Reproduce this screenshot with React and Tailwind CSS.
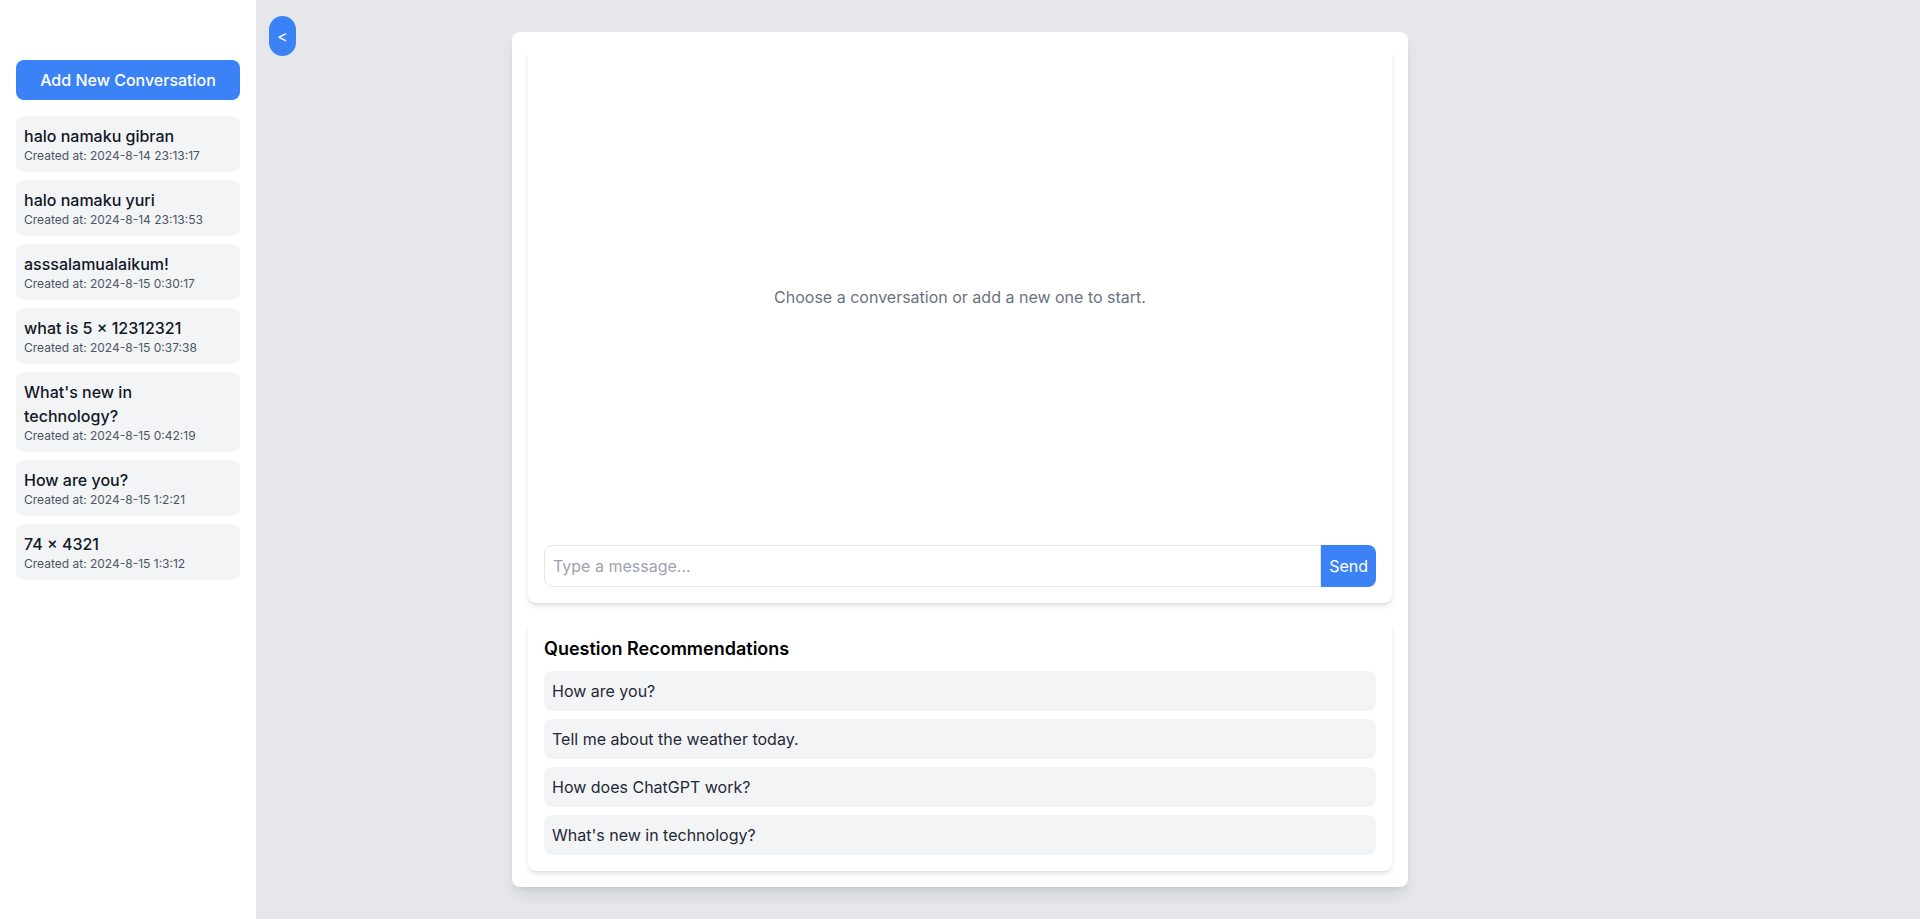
import { useState } from 'react';

const conversations = [
  { id: 1, title: 'halo namaku gibran', createdAt: '2024-8-14 23:13:17' },
  { id: 2, title: 'halo namaku yuri', createdAt: '2024-8-14 23:13:53' },
  { id: 3, title: 'asssalamualaikum!', createdAt: '2024-8-15 0:30:17' },
  { id: 4, title: 'what is 5 × 12312321', createdAt: '2024-8-15 0:37:38' },
  { id: 5, title: "What's new in technology?", createdAt: '2024-8-15 0:42:19' },
  { id: 6, title: 'How are you?', createdAt: '2024-8-15 1:2:21' },
  { id: 7, title: '74 × 4321', createdAt: '2024-8-15 1:3:12' },
];

const recommendations = [
  'How are you?',
  'Tell me about the weather today.',
  'How does ChatGPT work?',
  "What's new in technology?",
];

export default function App() {
  const [open, setOpen] = useState(true);
  const [message, setMessage] = useState('');

  return (
    <div className="min-h-screen bg-[#e5e7eb] font-['Inter',sans-serif] text-[#111827]">
      {/* Sidebar */}
      {open && (
        <aside className="fixed left-0 top-0 z-10 h-screen w-64 bg-white px-4 pt-[60px]">
          <button className="mb-4 h-10 w-full rounded-lg bg-[#3b82f6] text-base font-medium text-white">
            Add New Conversation
          </button>
          <div className="flex flex-col gap-2">
            {conversations.map(c => (
              <div key={c.id} className="cursor-pointer rounded-lg bg-[#f3f4f6] p-2">
                <p className="max-w-[200px] text-base font-medium leading-6">{c.title}</p>
                <p className="text-xs leading-4 text-[#4b5563]">Created at: {c.createdAt}</p>
              </div>
            ))}
          </div>
        </aside>
      )}

      <button
        onClick={() => setOpen(!open)}
        className={`fixed top-4 z-20 h-10 rounded-full bg-[#3b82f6] px-2 text-base text-white ${open ? 'left-[269px]' : 'left-4'}`}
      >
        {open ? '<' : '>'}
      </button>

      {/* Main */}
      <main className="py-8">
        <div className="mx-auto w-[896px] rounded-lg bg-white p-4 shadow-lg">
          <div className="flex flex-col rounded-lg bg-white p-4 shadow-md">
            <div className="mb-4 flex h-[465px] items-center justify-center">
              <p className="text-base text-[#6b7280]">Choose a conversation or add a new one to start.</p>
            </div>
            <div className="flex">
              <input
                value={message}
                onChange={e => setMessage(e.target.value)}
                placeholder="Type a message..."
                className="h-[42px] flex-1 rounded-l-lg border border-[#e5e7eb] px-2 text-base outline-none placeholder:text-[#9ca3af]"
              />
              <button className="h-[42px] rounded-r-lg bg-[#3b82f6] px-2 text-base text-white">Send</button>
            </div>
          </div>

          <div className="mt-4 rounded-lg bg-white p-4 shadow-md">
            <h2 className="mb-2 text-lg font-semibold leading-7 text-black">Question Recommendations</h2>
            <div className="flex flex-col gap-2">
              {recommendations.map(r => (
                <div key={r} onClick={() => setMessage(r)} className="cursor-pointer rounded-lg bg-[#f3f4f6] p-2 text-base leading-6 text-[#1f2937]">
                  {r}
                </div>
              ))}
            </div>
          </div>
        </div>
      </main>
    </div>
  );
}
